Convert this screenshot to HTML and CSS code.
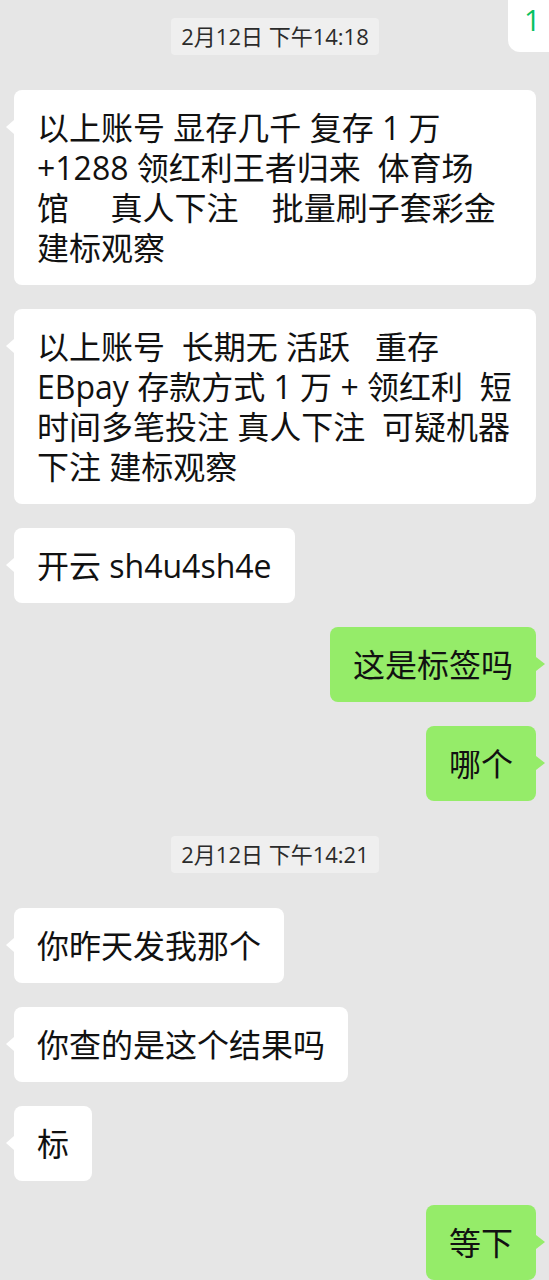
FILE: index.html
```html
<!DOCTYPE html>
<html lang="zh-CN">
  <head>
    <meta charset="UTF-8" />
    <meta name="viewport" content="width=device-width, initial-scale=1.0" />
    <title>Chat</title>
    <link rel="stylesheet" href="styles.css">
  </head>
  <body>
    <section class="chat">
      <div class="time">2月12日 下午14:18</div>
      <div class="row in"><div class="bubble long">以上账号 显存几千 复存 1 万<br>+1288 领红利王者归来  体育场<br>馆     真人下注    批量刷子套彩金<br>建标观察</div></div>
      <div class="row in"><div class="bubble long">以上账号  长期无 活跃   重存<br>EBpay 存款方式 1 万 + 领红利  短<br>时间多笔投注 真人下注  可疑机器<br>下注 建标观察</div></div>
      <div class="row in"><div class="bubble">开云 sh4u4sh4e</div></div>
      <div class="row out"><div class="bubble">这是标签吗</div></div>
      <div class="row out"><div class="bubble">哪个</div></div>
      <div class="time">2月12日 下午14:21</div>
      <div class="row in"><div class="bubble">你昨天发我那个</div></div>
      <div class="row in"><div class="bubble">你查的是这个结果吗</div></div>
      <div class="row in"><div class="bubble">标</div></div>
      <div class="row out"><div class="bubble">等下</div></div>
    </section>
    <!-- unread counter, cut off at the window edge -->
    <div class="badge">1</div>
  </body>
</html>
```

FILE: styles.css
```css
html,
body {
  margin: 0;
  height: 100%;
}
body {
  background: #e6e6e6;
  font-family: 'Open Sans', 'Noto Sans CJK SC', sans-serif;
  color: #111;
  overflow: hidden;
}
.chat {
  display: flex;
  flex-direction: column;
  gap: 24px;
  padding: 7px 13px 0 14px;
}
.time {
  align-self: center;
  margin: 11px 0;
  padding: 0 10px;
  height: 37px;
  line-height: 37px;
  font-size: 22px;
  color: #2b2b2b;
  background: #efefef;
  border-radius: 4px;
}
.row {
  display: flex;
}
.row.out {
  justify-content: flex-end;
}
.bubble {
  position: relative;
  box-sizing: border-box;
  max-width: 522px;
  padding: 17.5px 23px;
  font-size: 32px;
  line-height: 40px;
  white-space: pre;
  background: #fff;
  border-radius: 8px;
}
.bubble.long {
  flex: 1;
}
.in .bubble::before {
  content: '';
  position: absolute;
  left: -8px;
  top: 30px;
  border-top: 7px solid transparent;
  border-bottom: 7px solid transparent;
  border-right: 8px solid #fff;
}
.out .bubble {
  background: #95ec69;
}
.out .bubble::after {
  content: '';
  position: absolute;
  right: -9px;
  top: 30px;
  border-top: 7px solid transparent;
  border-bottom: 7px solid transparent;
  border-left: 9px solid #95ec69;
}
.badge {
  position: absolute;
  top: 0;
  right: 0;
  box-sizing: border-box;
  width: 41px;
  height: 52px;
  padding-left: 16px;
  font-size: 29px;
  line-height: normal;
  color: #07c160;
  background: #fff;
  border-bottom-left-radius: 12px;
}
```
